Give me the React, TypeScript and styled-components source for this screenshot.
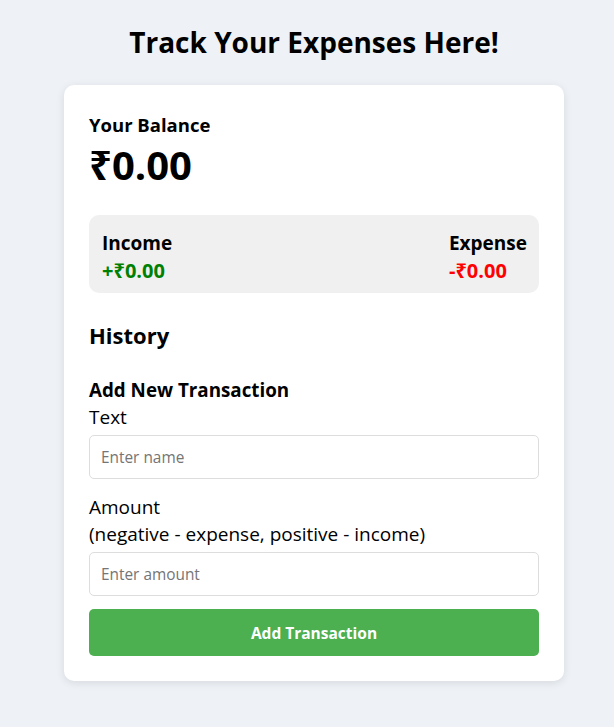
import React from "react";
import styled, { createGlobalStyle } from "styled-components";

const GlobalStyle = createGlobalStyle`
  * { box-sizing: border-box; }
  body {
    margin: 0;
    background: #eef2f7;
    font-family: "Open Sans", "Noto Sans", sans-serif;
    color: #000;
  }
`;

const Page = styled.div`
  display: flex;
  flex-direction: column;
  align-items: center;
  padding: 24px 0 40px 14px;
`;

const Title = styled.h1`
  margin: 0 0 25px;
  font-size: 28px;
  line-height: 36px;
  font-weight: 700;
`;

const Card = styled.div`
  width: 500px;
  background: #fff;
  border-radius: 10px;
  padding: 25px;
  box-shadow: 0 2px 8px rgba(0, 0, 0, 0.1);
`;

const BalanceLabel = styled.h4`
  margin: 0;
  font-size: 18.5px;
  line-height: 30px;
  font-weight: 700;
`;

const BalanceValue = styled.h2`
  margin: 0;
  font-size: 40px;
  line-height: 50px;
  font-weight: 700;
`;

const Summary = styled.div`
  margin-top: 25px;
  background: #f0f0f0;
  border-radius: 10px;
  padding: 15px 12px 9px 13px;
  display: flex;
  justify-content: space-between;
`;

const SummaryCol = styled.div`
  display: flex;
  flex-direction: column;
`;

const SummaryLabel = styled.div`
  font-size: 19px;
  line-height: 27px;
  font-weight: 700;
`;

const SummaryValue = styled.div<{ $tone: "plus" | "minus" }>`
  font-size: 20px;
  line-height: 27px;
  font-weight: 700;
  color: ${(p) => (p.$tone === "plus" ? "#008000" : "#ff0000")};
`;

const SectionTitle = styled.h3`
  margin: 27px 0 27px;
  font-size: 22px;
  line-height: 30px;
  font-weight: 700;
`;

const FormTitle = styled.h4`
  margin: 0;
  font-size: 18.8px;
  line-height: 27px;
  font-weight: 700;
`;

const Form = styled.form`
  display: flex;
  flex-direction: column;
`;

const Field = styled.div<{ $first?: boolean }>`
  display: flex;
  flex-direction: column;
  margin-top: ${(p) => (p.$first ? "0" : "15px")};
`;

const Label = styled.label`
  font-size: 19px;
  line-height: 27px;
  margin-bottom: 4px;
`;

const Input = styled.input`
  height: 44px;
  width: 100%;
  border: 1px solid #dddddd;
  border-radius: 5px;
  padding: 0 11px;
  font-family: inherit;
  font-size: 15.4px;
  color: #000;
  &::placeholder { color: #757575; }
`;

const Button = styled.button`
  margin-top: 13px;
  height: 47px;
  width: 100%;
  border: none;
  border-radius: 5px;
  background: #4caf50;
  color: #fff;
  font-family: inherit;
  font-size: 15.5px;
  font-weight: 700;
  cursor: pointer;
`;

export default function App() {
  return (
    <>
      <GlobalStyle />
      <Page>
        <Title>Track Your Expenses Here!</Title>
        <Card>
          <BalanceLabel>Your Balance</BalanceLabel>
          <BalanceValue>₹0.00</BalanceValue>
          <Summary>
            <SummaryCol>
              <SummaryLabel>Income</SummaryLabel>
              <SummaryValue $tone="plus">+₹0.00</SummaryValue>
            </SummaryCol>
            <SummaryCol>
              <SummaryLabel>Expense</SummaryLabel>
              <SummaryValue $tone="minus">-₹0.00</SummaryValue>
            </SummaryCol>
          </Summary>
          <SectionTitle>History</SectionTitle>
          <FormTitle>Add New Transaction</FormTitle>
          <Form onSubmit={(e) => e.preventDefault()}>
            <Field $first>
              <Label>Text</Label>
              <Input type="text" placeholder="Enter name" />
            </Field>
            <Field>
              <Label>
                Amount
                <br />
                (negative - expense, positive - income)
              </Label>
              <Input type="number" placeholder="Enter amount" />
            </Field>
            <Button type="submit">Add Transaction</Button>
          </Form>
        </Card>
      </Page>
    </>
  );
}
